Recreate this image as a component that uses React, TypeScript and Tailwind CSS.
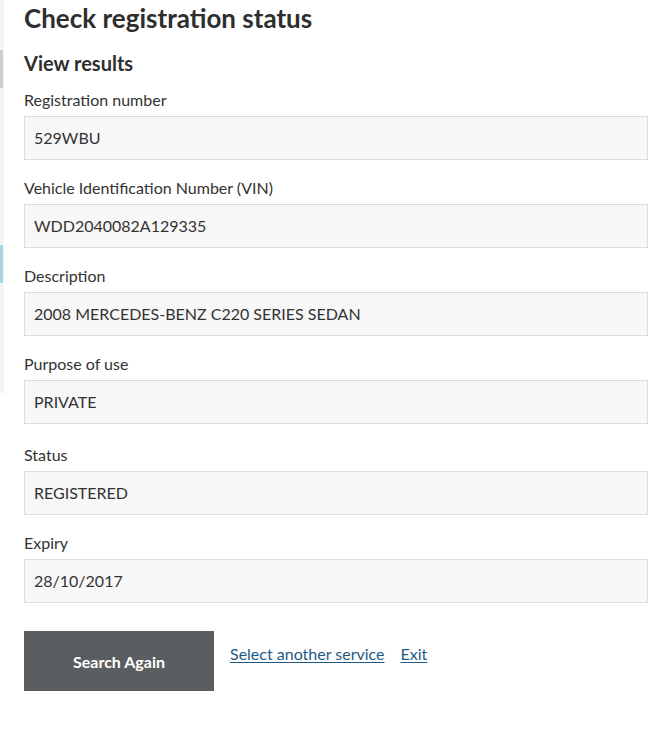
const fields = [
  { label: 'Registration number', value: '529WBU' },
  { label: 'Vehicle Identification Number (VIN)', value: 'WDD2040082A129335' },
  { label: 'Description', value: '2008 MERCEDES-BENZ C220 SERIES SEDAN' },
  { label: 'Purpose of use', value: 'PRIVATE' },
  { label: 'Status', value: 'REGISTERED', gap: true },
  { label: 'Expiry', value: '28/10/2017' },
];

export default function App() {
  return (
    <div className="flex min-h-[735px] bg-white font-['Lato','Open_Sans',sans-serif] text-[#333]">
      {/* edge of the side nav, cut off by the crop */}
      <div className="flex h-[393px] w-[4px] shrink-0 flex-col bg-[#f4f4f4]">
        <div className="mt-[50px] h-[38px] w-[3px] bg-[#cfcfcf]" />
        <div className="mt-[157px] h-[38px] w-[3px] bg-[#a6d6e4]" />
      </div>

      <main className="w-[644px] pl-[20px]">
        <h1 className="mt-[1px] text-[26px] font-bold leading-[34px] text-[#2e2e2e]">Check registration status</h1>
        <h2 className="mt-[14px] text-[20px] font-bold leading-[28px] text-[#2e2e2e]">View results</h2>

        <dl className="mt-[12px]">
          {fields.map((f, i) => (
            <div key={f.label} className={i === 0 ? '' : f.gap ? 'mt-[20px]' : 'mt-[17px]'}>
              <dt className="text-[16px] leading-[22px]">{f.label}</dt>
              <dd className="mt-[5px] flex h-[44px] items-center border border-[#dcdcdc] bg-[#f7f7f7] px-[9px] text-[16px]">
                {f.value}
              </dd>
            </div>
          ))}
        </dl>

        <div className="mt-[28px] flex items-start gap-[16px]">
          <button
            type="button"
            className="h-[60px] w-[190px] bg-[#5b5e61] pt-[2px] text-[16px] font-bold text-white"
          >
            Search Again
          </button>
          <div className="mt-[12px] flex gap-[16px] text-[16px] leading-[22px] text-[#1f5a86]">
            <a href="#" className="underline underline-offset-2">Select another service</a>
            <a href="#" className="underline underline-offset-2">Exit</a>
          </div>
        </div>
      </main>
    </div>
  );
}
